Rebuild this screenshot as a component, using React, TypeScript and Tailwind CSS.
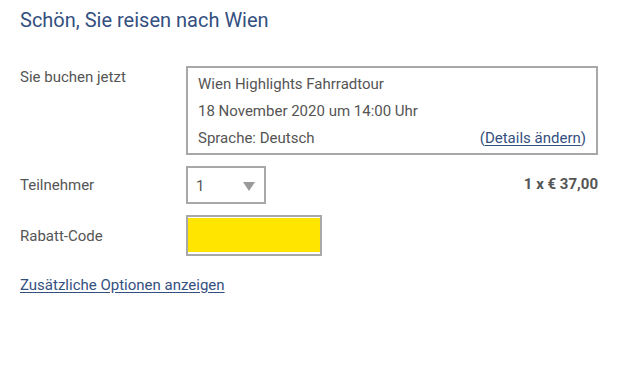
export default function App() {
  return (
    <div
      className="w-[624px] h-[371px] bg-white pl-5 pt-[8px] text-[#555] text-[15px]"
      style={{ fontFamily: 'Roboto, "Liberation Sans", sans-serif' }}
    >
      <div className="w-[578px]">
        <h1 className="text-[20px] leading-[25px] text-[#34507f]">Schön, Sie reisen nach Wien</h1>

        {/* Sie buchen jetzt */}
        <div className="flex mt-[33px]">
          <div className="w-[166px] pt-[1px] leading-[20px]">Sie buchen jetzt</div>
          <div className="w-[412px] h-[89px] border-2 border-[#a8a8a8] px-[10px] pt-[3px] leading-[27px]">
            <div>Wien Highlights Fahrradtour</div>
            <div>18 November 2020 um 14:00 Uhr</div>
            <div className="flex justify-between">
              <span>Sprache: Deutsch</span>
              <span className="text-[#34507f]">
                (<span className="underline underline-offset-2">Details ändern</span>)
              </span>
            </div>
          </div>
        </div>

        {/* Teilnehmer */}
        <div className="flex items-center mt-[11px]">
          <div className="w-[166px] leading-[20px]">Teilnehmer</div>
          <div className="w-[80px] h-[38px] border-2 border-[#a8a8a8] flex items-center justify-between pl-[8px] pr-[9px] pt-[3px]">
            <span>1</span>
            <svg width="12" height="9" viewBox="0 0 12 9">
              <polygon points="0,0 12,0 6,9" fill="#9a9a9a" />
            </svg>
          </div>
          <div className="ml-auto font-bold text-[#555] pb-[2px]">1 x € 37,00</div>
        </div>

        {/* Rabatt-Code */}
        <div className="flex items-center mt-[11px]">
          <div className="w-[166px] leading-[20px]">Rabatt-Code</div>
          <div className="w-[136px] h-[41px] border-2 border-[#a8a8a8] bg-white pt-[1px] pb-[2px]">
            <div className="w-full h-full bg-[#ffe500]" />
          </div>
        </div>

        <div className="mt-[19px] text-[#34507f] underline underline-offset-2 leading-[20px]">
          Zusätzliche Optionen anzeigen
        </div>
      </div>
    </div>
  )
}
